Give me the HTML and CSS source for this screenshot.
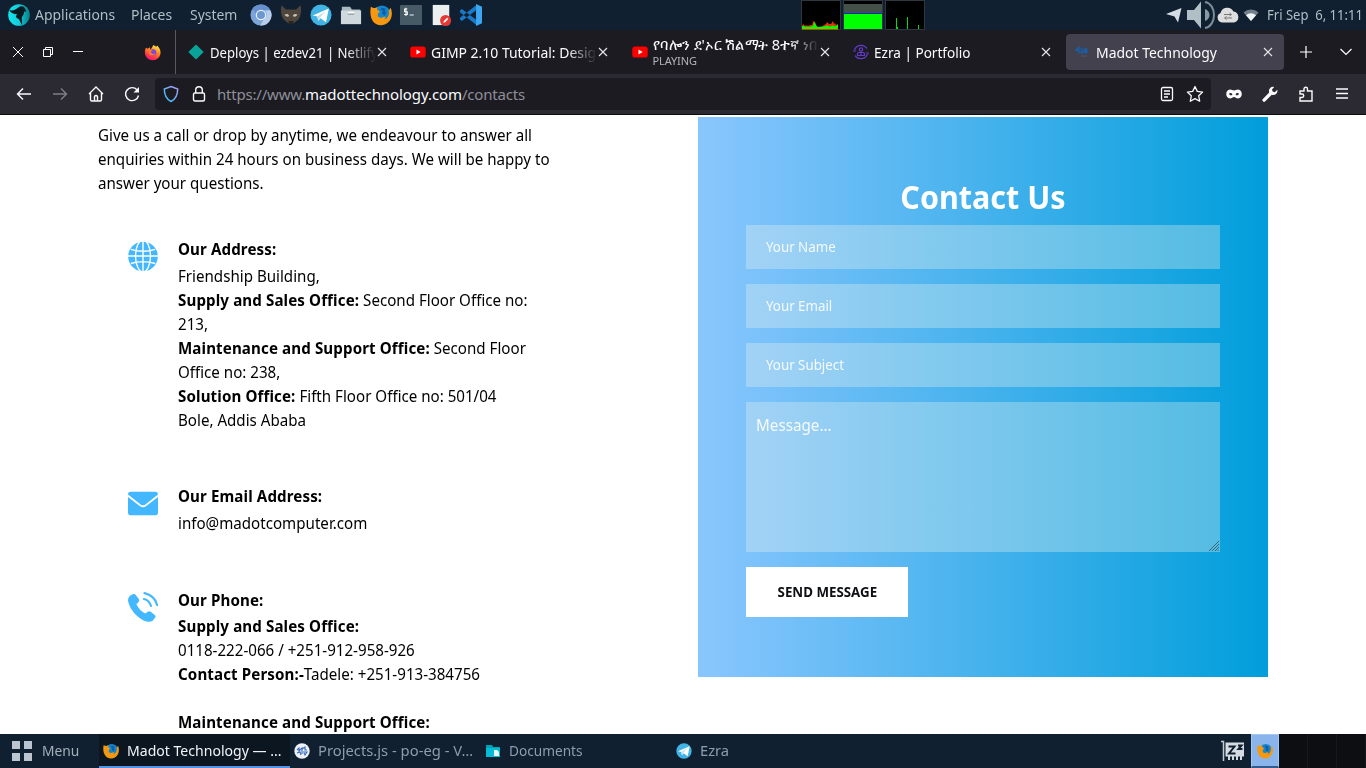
FILE: index.html
```html
<!DOCTYPE html>
<html lang="en"><head><meta charset="utf-8"><title>Madot Technology</title><link rel="stylesheet" href="styles.css"></head>
<body>
<svg width="0" height="0" class="defs" aria-hidden="true">
<defs>
<linearGradient id="foxg" x1=".8" y1="0" x2=".3" y2="1"><stop stop-color="#fff44f"/><stop offset=".4" stop-color="#ff8a22"/><stop offset=".75" stop-color="#ff3647"/><stop offset="1" stop-color="#e31587"/></linearGradient>
<linearGradient id="shg" x1="0" y1="1" x2="1" y2="0"><stop stop-color="#2cc3f5"/><stop offset="1" stop-color="#a99cf5"/></linearGradient>
<linearGradient id="parg"><stop stop-color="#15e4ee"/><stop offset=".5" stop-color="#12cedb"/><stop offset="1" stop-color="#087e88"/></linearGradient>
<symbol id="x" viewBox="0 0 10 10"><path d="M1 1l8 8M9 1L1 9" stroke="#e8e8ec" stroke-width="1.1" fill="none"/></symbol>
<symbol id="yt" viewBox="0 0 16 12"><rect x=".3" y=".5" width="15.4" height="11" rx="2.6" fill="#f00"/><path d="M6.5 3.5v5L10.7 6z" fill="#fff"/></symbol>
<symbol id="tg" viewBox="0 0 24 24"><circle cx="12" cy="12" r="11.5" fill="#41b4e6"/><path d="M3 12.5L20.5 5l-3 15-6-4.5-2.500 3-1-5z" fill="#fff"/><path d="M7.800 13.500L17.500 7.500l-7 7.500-1.500 3.500z" fill="#c5dceb"/></symbol>
<symbol id="ff" viewBox="0 0 24 24"><circle cx="13" cy="11" r="9.500" fill="#1686cc"/><path d="M1 3c1.600 1 2.600 1.300 4.200 1.400l2.800-.9-.3 2.500 3 2.200-2 2.500c-1 3.300 1.500 5.300 4.500 4 1.700-.8 2.900-1.200 3.800-.5-.5 1.300-1 1.800-1.500 2.200 4-.5 5.700-4.300 5-9.300l2-3c3.600 8-.1 18.500-10 19C4 23.500-1.500 15 1 3z" fill="#f6980f"/><path d="M13 4l4 1-1 4 2-1-2 5-3-3 1-3-3-1z" fill="#0d5ea6"/></symbol>
</defs></svg>

<header class="panel">
  <div class="menus">
    <svg class="parrot" viewBox="0 0 24 24"><circle cx="12" cy="12" r="11.800" fill="url(#parg)"/><path d="M1.500 6.500C5 8 8 6 11 4c3-2.300 6.500-2 7.500 1l1.500 3.500-2.500-.2c0 3-1 4.700-2.500 6.200l.5 9-3.500-7C7.500 14.500 8 13 10.500 11.500 6 11 3 10 1.500 6.500z" fill="#071a20"/></svg>
    <span class="ui w1"><i>Applications</i></span><span class="ui w2"><i>Places</i></span><span class="ui w3"><i>System</i></span>
  </div>
  <div class="launch">
    <svg viewBox="0 0 24 24"><circle cx="12" cy="12" r="11.500" fill="#7ba5d9"/><path d="M12 .5a11.500 11.500 0 0 1 10 6H12a5.500 5.500 0 0 0-5.500 4L2.700 5A11.500 11.500 0 0 1 12 .5z" fill="#668fcd"/><path d="M22.300 7A11.500 11.500 0 0 1 11 23.500l5-8a5.500 5.500 0 0 0 .5-8.500z" fill="#b7cfea"/><circle cx="12" cy="12" r="5.700" fill="#e9f0f9"/><circle cx="12" cy="12" r="4.400" fill="#6b98d3"/></svg>
    <svg viewBox="0 0 24 24"><path d="M1.500 1.500c2 1 3.500 3 5 4.500h11c1.500-1.500 3-3.500 5-4.500 1 6 .5 11-2.500 15.500l-5 4H9l-5-4C1 12.500.5 7.500 1.500 1.500z" fill="#4e463d"/><path d="M5 11.500c2-1 4-1 5 1.500-1.500 1.500-4 1-5-1.500zM14 13c1-2.500 3-2.500 5-1.500-1 2.500-3.500 3-5 1.500z" fill="#c6c1b3"/><path d="M9 18.500h6l-1 3h-4z" fill="#2a2521"/></svg>
    <svg viewBox="0 0 24 24"><use href="#tg"/></svg>
    <svg viewBox="0 0 24 24"><path d="M2 3h9l2 3h9v15H2z" fill="#a9b7be"/><path d="M1 7h22v15H1z" fill="#cfd8dc"/><path d="M8.500 9.500h7" stroke="#fff" stroke-width="2"/><path d="M8.500 11h7" stroke="#71828b"/></svg>
    <svg viewBox="0 0 24 24"><use href="#ff"/></svg>
    <svg viewBox="0 0 24 24"><rect y="1" width="24" height="22" rx="1" fill="#455a64"/><path d="M8 5.500H5v3h3v3H4.500M6.500 4v9" stroke="#fff" fill="none" stroke-width="1.100"/><path d="M10.500 12h4.500" stroke="#fff"/></svg>
    <svg viewBox="0 0 24 24"><path d="M3 1h18v22H3z" fill="#eceff0"/><circle cx="17" cy="18" r="6" fill="#e53935"/><path d="M14.500 20.500l.6-2 3.500-3.500 1.400 1.400-3.500 3.500z" fill="#fff"/></svg>
    <svg viewBox="0 0 24 24"><path d="M0 7l2-1.500L18 17.500V23L0 9zM0 17l2 1.500L18 6.500V1L0 15z" fill="#1979c9"/><path d="M17.500 0l6.500 3v18l-6.500 3z" fill="#3ba7f0"/></svg>
  </div>
  <div class="monitors">
    <svg viewBox="0 0 40 30"><rect x=".5" y=".5" width="39" height="29" fill="#000" stroke="#2e3640"/><path d="M1 26l1-2 2 2 1-1 2 1 2-1 2 0 1-3 1-1 1 1 1 3 2 2h3l3-2 2-1 1-2 2 2 2 0 2-3 1 3 1-1 1 2 2-1v6H1z" fill="#d31"/><path d="M1 29v-3l2 0 2 1 2-.5 2 .5 3-1 1-4 1 1 2 4 7-.5 3-1 3 1 3-1 2 1 3-2v4.500z" fill="#0f0"/></svg>
    <svg viewBox="0 0 40 30"><rect x=".5" y=".5" width="39" height="29" fill="#000" stroke="#2e3640"/><path d="M1 4h38v9H1z" fill="#445047"/><path d="M1 13h38v1H1z" fill="#0028d0"/><path d="M1 14h38v15H1z" fill="#0f0"/></svg>
    <svg viewBox="0 0 40 30"><rect x=".5" y=".5" width="39" height="29" fill="#000" stroke="#2e3640"/><path d="M11.500 18v11M12.500 27v2M22.500 17v12M33.500 25v4" stroke="#0d1" /></svg>
  </div>
  <div class="tray">
    <svg width="16" height="16" viewBox="0 0 16 16"><path d="M0 7L15.500 1 12 15.500 8.500 9.500z" fill="#d6dde4"/></svg>
    <svg width="30" height="30" viewBox="0 0 30 30"><path d="M1 10h7l7-8.500v27L8 20H1z" fill="#b0bec5"/><path d="M19 2c12 2 12 24 0 26" stroke="#788d98" stroke-width="2" fill="none"/><path d="M19 9c6 2 6 10 0 12z" fill="#879aa4"/></svg>
    <svg width="22" height="16" viewBox="0 0 22 16"><path d="M5 15.500A5 5 0 0 1 3.500 6 7 7 0 0 1 16.500 4.500 5.600 5.600 0 0 1 17 15.500z" fill="#dedede"/><path d="M7 7.500h7M12.500 6l2 1.500-2 1.500M15 11H8M9.500 9.500l-2 1.500 2 1.500" stroke="#777" fill="none"/></svg>
    <svg width="16" height="12" viewBox="0 0 16 12"><path d="M.5 3.500a11 11 0 0 1 15 0L8 12z" fill="#71808a"/><path d="M3 6.200a7.500 7.500 0 0 1 10 0L8 12z" fill="#f0f3f4"/></svg>
    <span class="ui clock"><i>Fri Sep&nbsp; 6, 11:11</i></span>
  </div>
</header>

<div class="tabbar">
  <div class="win">
    <svg width="12" height="12" viewBox="0 0 12 12"><path d="M1 1l10 10M11 1L1 11" stroke="#fff"/></svg>
    <svg width="12" height="12" viewBox="0 0 12 12" fill="none" stroke="#fff"><path d="M1.500 3.500h7v7h-7zM3.500 3.500v-2h7v7h-2"/></svg>
    <svg width="12" height="12" viewBox="0 0 12 12"><path d="M1 5.500h10" stroke="#fff"/></svg>
    <svg class="fx" width="17" height="17" viewBox="0 0 18 18"><path d="M2 4l2 1 2-1.500L7 6l3-5 3 2 1-1.500c3 3 4 6 3.300 9.500A8.300 8.300 0 0 1 1 10C.8 8 1 6 2 4z" fill="url(#foxg)"/><circle cx="9.500" cy="9" r="3.500" fill="#8047d8"/><path d="M3 6l6 .500-2 2 2 2 3-.5c-1 2-4 3-6 1.500z" fill="#ff7b29"/></svg>
  </div>
  <div class="tabs">
    <div class="tab"><svg class="fav" viewBox="0 0 16 16"><path d="M8 .500L15.700 8 8 15.500.3 8z" fill="#0aa39a"/></svg><div class="title fade first"><span class="ui"><i>Deploys | ezdev21 | Netlify</i></span></div><svg class="cl"><use href="#x"/></svg></div>
    <div class="tab"><svg class="fav yt"><use href="#yt"/></svg><div class="title fade"><span class="ui"><i>GIMP 2.10 Tutorial: Desig</i></span></div><svg class="cl"><use href="#x"/></svg></div>
    <div class="tab"><svg class="fav yt"><use href="#yt"/></svg><div class="title fade two"><span class="am">የባሎን ደ'ኦር ሽልማት 8ተኛ ነበ</span><small>PLAYING</small></div><svg class="cl"><use href="#x"/></svg></div>
    <div class="tab"><svg class="fav" viewBox="0 0 16 16" fill="none" stroke="#623bc6" stroke-width="1.200"><path d="M1.500 6a7 7 0 0 1 12.500-1.500M14.500 10a7 7 0 0 1-12.500 1.500M0 7h3M13 9h3"/><circle cx="8" cy="5.500" r="1.700"/><path d="M4.500 11.500V10q0-1.500 1.500-1.500h4q1.500 0 1.500 1.500v1.500zM8 8.500v3"/></svg><div class="title ez"><span class="ui"><i>Ezra | Portfolio</i></span></div><svg class="cl"><use href="#x"/></svg></div>
    <div class="tab active"><svg class="fav" viewBox="0 0 16 16" fill="#1c5da6"><path d="M0 6l3-3.500h1.500v7H3V7H0zM5.500 3.500h1v3h1v-3h1v6h-3zM9 4.500h3.500v5H9z"/><path d="M6 11.500h6v1H6z" fill="#59566a"/></svg><div class="title"><span class="ui"><i>Madot Technology</i></span></div><svg class="cl"><use href="#x"/></svg></div>
  </div>
  <svg class="plus" width="12" height="12" viewBox="0 0 12 12"><path d="M6 0v12M0 6h12" stroke="#fff" stroke-width="1.200"/></svg>
  <svg width="12" height="8" viewBox="0 0 12 8"><path d="M.5 1L6 6.500 11.500 1" stroke="#fff" stroke-width="1.200" fill="none"/></svg>
</div>

<nav class="toolbar">
  <div class="nav">
    <svg viewBox="0 0 16 16"><path d="M15 8H1.500M7 2.500L1.500 8 7 13.500"/></svg>
    <svg class="off" viewBox="0 0 16 16"><path d="M1 8h13.500M9 2.500L14.500 8 9 13.500"/></svg>
    <svg viewBox="0 0 16 16"><path d="M1 8l7-7 7 7M2.500 7v6.500q0 1.500 1.500 1.500h8q1.500 0 1.500-1.500V7M6.500 15v-4.500q1.500-2 3 0V15"/></svg>
    <svg viewBox="0 0 16 16"><path d="M13 3.800A6.500 6.500 0 1 0 14.500 9.500"/><path d="M15 1v5.500H9.500z" fill="#fbfbfe" stroke="none"/></svg>
  </div>
  <div class="urlbar">
    <svg width="16" height="18" viewBox="0 0 16 18"><path d="M8 1.500l6.700 2.500c0 6-1.700 10-6.700 12.500C3 14 1.300 10 1.300 4z" fill="none" stroke="url(#shg)" stroke-width="1.500"/></svg>
    <svg class="lock" width="14" height="18" viewBox="0 0 14 18" fill="none" stroke="#fbfbfe" stroke-width="1.400"><rect x="1.500" y="8" width="11" height="8" rx="1.500"/><path d="M3.700 8V5a3.300 3.300 0 0 1 6.600 0v3"/></svg>
    <span class="url">https://www.<em>madottechnology.com</em>/contacts</span>
    <svg class="reader" width="14" height="16" viewBox="0 0 14 16" fill="none" stroke="#fbfbfe" stroke-width="1.300"><rect x="1.500" y="1.500" width="11" height="13" rx="1.500"/><path d="M4 5h6M4 8h6M4 11h4"/></svg>
    <svg width="18" height="18" viewBox="0 0 18 18" fill="none" stroke="#fbfbfe" stroke-width="1.300" stroke-linejoin="round"><path d="M9 1.500l2.300 4.900 5.300.7-3.900 3.700 1 5.400L9 13.600l-4.700 2.600 1-5.400L1.400 7.100l5.300-.7z"/></svg>
  </div>
  <div class="ext">
    <svg viewBox="0 0 16 16"><path fill-rule="evenodd" fill="#fbfbfe" stroke="none" d="M4 3.500c2 0 2.500 1 4 1s2-1 4-1c5 0 5 9 0 9-2 0-2.500-1.500-4-1.500s-2 1.500-4 1.500c-5 0-5-9 0-9zM3 8c1 1.800 3 1.800 3.500.3C5.500 6.500 3.500 6.500 3 8zM13 8c-.5-1.500-2.500-1.500-3.500.3.500 1.500 2.500 1.500 3.500-.3z"/></svg>
    <svg viewBox="0 0 16 16"><path fill="#fbfbfe" stroke="none" d="M15.300 3.800a4.200 4.200 0 0 1-5.500 5L3.300 15.300a1.600 1.600 0 0 1-2.400-2.400L7.200 6.400a4.200 4.200 0 0 1 5-5.500L10 3.400l.6 2.200 2.200.6z"/></svg>
    <svg viewBox="0 0 16 16"><path d="M2 15V11.500h2a1.700 1.700 0 0 0 0-3.500H2V5h4V3a1.700 1.700 0 0 1 3.500 0v2H14v10z"/></svg>
    <svg viewBox="0 0 16 16"><path d="M2 3h12M2 7.500h12M2 12h12"/></svg>
  </div>
</nav>

<main>
  <section class="info">
    <p class="intro">Give us a call or drop by anytime, we endeavour to answer all<br>enquiries within 24 hours on business days. We will be happy to<br>answer your questions.</p>
    <article><svg viewBox="0 0 32 32"><circle cx="16" cy="16.500" r="15.800" fill="#43b7ff"/><g fill="none" stroke="#fff" stroke-width="1.500"><path d="M16 0v32M0 16h32M3 9q13 4 26 0M3 24q13-4 26 0"/><ellipse cx="16" cy="16" rx="8" ry="17"/></g></svg>
      <div><h3>Our Address:</h3><p>Friendship Building,<br><b>Supply and Sales Office:</b> Second Floor Office no:<br>213,<br><b>Maintenance and Support Office:</b> Second Floor<br>Office no: 238,<br><b>Solution Office:</b> Fifth Floor Office no: 501/04<br>Bole, Addis Ababa</p></div></article>
    <article class="mail"><svg viewBox="0 0 32 32"><path fill="#43b7ff" d="M3 4h26q3 0 3 3L18.500 17.500q-2.500 2-5 0L0 7q0-3 3-3zM0 9.500l12.500 9.800q3.500 2.500 7 0L32 9.500V26q0 3-3 3H3q-3 0-3-3z"/></svg>
      <div><h3>Our Email Address:</h3><p>info@madotcomputer.com</p></div></article>
    <article class="phone"><svg viewBox="0 0 32 32"><path fill="#43b7ff" d="M2 4l3-1.500q2-1 3.500 1l3 4q1 2-.5 3.500L9 13q3 6.500 9.500 10l2.500-2q1.500-1 3.200 0l4.300 3.500q1.500 1.500.3 3L26 31q-4 2-10-1C7 25 1 16 0 9q0-3 2-5z"/><g fill="none" stroke="#43b7ff" stroke-width="2.200" stroke-linecap="round"><path d="M17.500 1.200Q28.500 3.500 31 14M17 7.500q6 1.500 7.500 7.500"/></g></svg>
      <div><h3>Our Phone:</h3><p><b>Supply and Sales Office:</b><br>0118-222-066 / +251-912-958-926<br><b>Contact Person:-</b>Tadele: +251-913-384756<br><br><b>Maintenance and Support Office:</b></p></div></article>
  </section>
  <form class="contact">
    <h2>Contact Us</h2>
    <div class="field"><span>Your Name</span></div>
    <div class="field"><span>Your Email</span></div>
    <div class="field"><span>Your Subject</span></div>
    <div class="field area"><span>Message...</span><svg width="10" height="10" viewBox="0 0 10 10"><path d="M0 10L10 0M3 10l7-7M6 10l4-4M8.500 10l1.500-1.500" stroke="#3a6576"/></svg></div>
    <button type="button"><span>SEND MESSAGE</span></button>
  </form>
</main>

<footer class="taskbar">
  <div class="menu"><svg width="20" height="20" viewBox="0 0 20 20"><path d="M0 0h8v8H0zM12 0h8v8h-8zM0 12h8v8H0zM12 12h8v8h-8z" fill="#bcc5cf"/></svg><span class="ui"><i>Menu</i></span></div>
  <div class="task on"><svg viewBox="0 0 24 24"><use href="#ff"/></svg><span class="ui"><i>Madot Technology — ...</i></span></div>
  <div class="task code"><svg viewBox="0 0 16 16"><circle cx="8" cy="8" r="7.700" fill="#eef1f5"/><path d="M3 7l2-2v3l3-3v6M3 10l3-1 1 3M8 6l3-2v3h2M9 9h4l-2 3-1-2" stroke="#356bbd" stroke-width="1.100" fill="none"/></svg><span class="ui"><i>Projects.js - po-eg - V…</i></span></div>
  <div class="task"><svg viewBox="0 0 16 16"><path d="M1 2h6l1 2h7v10H1z" fill="#00a3b5"/><path d="M1 5h14v9H1z" fill="#00bcd4"/><path d="M9 7h3l2 2v4H9z" fill="#e7fbfd"/></svg><span class="ui doc"><i>Documents</i></span></div>
  <div class="task"><svg viewBox="0 0 24 24"><use href="#tg"/></svg><span class="ui ezra"><i>Ezra</i></span></div>
  <svg class="zz" width="24" height="22" viewBox="0 0 24 22"><path d="M0 1.500h2.500V21" stroke="#c3cbd3" stroke-width="1.500" fill="none"/><path d="M4.500 2.500H23v14H4.500zM7 16h2v4H7zM11 16h2v4h-2zM15 16h2v4h-2zM19 16h2v4h-2z" fill="#d5dbe2"/><path d="M7.500 6.500h6l-5.500 7h6.500M17 5.500h3.500L17.500 9h4" fill="none" stroke="#10202f" stroke-width="2"/></svg>
  <div class="pager"><div class="cur"><svg width="16" height="16" viewBox="0 0 24 24"><use href="#ff"/></svg></div><div></div><div></div><div></div></div>
</footer>
</body></html>
```
FILE: styles.css
```css
*{box-sizing:border-box}
body{margin:0;width:1366px;height:768px;overflow:hidden;display:flex;flex-direction:column;font:16px/24px "Noto Sans","Open Sans",sans-serif;background:#fff;color:#000}
.defs{position:absolute}
svg{flex:none;display:block}
.ui{font-size:15px;line-height:20px;white-space:nowrap;display:block}
.ui i{font-style:normal;display:inline-block;transform:scaleX(.93);transform-origin:0 50%}

.panel{height:30px;flex:none;background:#112030;display:flex;color:#b0bec5;align-items:center}
.panel>div{flex:none}
.panel .ui{margin-top:-2px}
.menus{display:flex;width:249px;padding-left:8px;align-items:center}
.parrot{width:22px;height:22px;margin-right:5px}
.w1{width:96px}.w2{width:59px}
.launch{display:flex;gap:6px;width:552px}
.launch svg{width:24px;height:24px;padding:1px}
.monitors{display:flex;gap:2px;width:365px}
.monitors svg{width:40px;height:30px}
.tray{display:flex;align-items:center;width:200px}
.tray svg:nth-child(2){margin-left:4px}
.tray svg:nth-child(3){margin-left:1px}
.tray svg:nth-child(4){margin-left:4px}
.clock{margin-left:8px;width:98px}
.clock i{transform:scaleX(.87)}

.tabbar{height:44px;flex:none;background:#1c1b22;display:flex;align-items:center;color:#fbfbfe}
.win{width:176px;height:44px;border-right:1px solid #5a5961;display:flex;align-items:center;padding-left:12px;gap:18px}
.fx{margin-left:42px}
.tabs{margin-left:3px;display:flex;gap:3.750px;width:1109px}
.tab{width:218px;height:36px;border-radius:4px;padding-left:9px;display:flex;align-items:center;flex:none}
.active{background:#42414d}
.fav{width:16px;height:16px;margin-right:5px}
.yt{height:12px}
.title{width:166px;overflow:hidden;margin-right:1px}
.fade{mask-image:linear-gradient(90deg,#000 82%,transparent)}
.first{margin-left:1px;width:166px}
.first i{transform:scaleX(.875)}
.ez i{transform:scaleX(.905)}
.cl{width:10px;height:10px}
.am{display:block;font-size:15px;line-height:17px;height:17px;white-space:nowrap;transform:scaleX(.972);transform-origin:0 0}
.title small{display:block;font-size:11px;line-height:15px;color:#b4b3ba;letter-spacing:-.1px}
.plus{margin:0 11px 0 12px}
.plus+svg{margin-left:17px}

.toolbar{height:41px;flex:none;background:#2b2a33;border-bottom:1px solid #0c0c0d;display:flex;align-items:center}
.nav{display:flex;gap:20px;width:155px;padding-left:16px}
.nav svg,.ext svg{width:16px;height:16px;fill:none;stroke:#fbfbfe;stroke-width:1.400}
.nav .off{opacity:.4}
.urlbar{width:1056px;height:32px;background:#1c1b22;border-radius:4px;display:flex;align-items:center;padding:0 7px 0 8px}
.lock{margin-left:13px}
.url{font-size:15px;letter-spacing:-.2px;color:#8f8f98;margin-left:11px;flex:1}
.url em{font-style:normal;letter-spacing:-.08px;color:#fbfbfe}
.reader{margin-right:12px}
.ext{display:flex;gap:20px;padding-left:15px}

main{height:619px;flex:none;overflow:hidden;display:flex}
.info{width:698px;padding:8px 0 0 98px}
p,h2,h3{margin:0}
.intro,article>div{white-space:nowrap;transform:scaleX(.945);transform-origin:0 0}
b,h3{letter-spacing:.12px}
article{display:flex;padding-left:30px;margin-top:42px}
article>svg{width:30px;height:30px;margin:4px 20px 0 0}
h3{font-size:16px;line-height:24px;margin-bottom:3px}
.mail{margin-top:52px}
.phone{margin-top:53px}
.phone h3{margin-bottom:2px}
.contact{width:570px;height:560px;margin-top:2px;padding:60px 48px 0;background:linear-gradient(90deg,#8ac6fe,#009edb);color:#fff}
h2{font-size:32px;line-height:40px;height:48px;text-align:center;transform:scaleX(.953)}
.field{height:44px;margin-bottom:15px;background:rgba(233,244,236,.330);padding:0 20px;font-size:14px;line-height:44px;color:rgba(255,255,255,.9)}
.field span,button span{display:inline-block;transform:scaleX(.951);transform-origin:0 50%}
.area{height:150px;padding:11px 0 0 10px;font-size:16px;line-height:24px;display:flex;justify-content:space-between;align-items:flex-start}
.area svg{margin:128px 1px 0 0}
button{width:162px;height:50px;border:0;padding:0;background:#fff;color:#0d0f12;font:700 14px/50px "Noto Sans",sans-serif}
button span{transform-origin:50% 50%}

.taskbar{height:34px;flex:none;background:#112030;color:#8c9dab;display:flex;align-items:center}
.taskbar .ui{margin-top:-2px}
.menu{width:99px;padding-left:12px;display:flex;gap:10px;align-items:center;color:#a3b0bb}
.menu i{transform:scaleX(.92)}
.task{width:191px;height:34px;padding-left:4px;display:flex;gap:8px;align-items:center}
.task svg{width:16px;height:16px}
.on{background:#0c1620;color:#f0f4f7;border-bottom:2px solid #5294e2;padding-top:2px}
.on i{transform:scaleX(.937)}
.code i{transform:scaleX(.985)}
.doc i{transform:scaleX(.91)}
.ezra i{transform:scaleX(.98)}
.zz{margin-left:358px}
.pager{display:flex;margin-left:6px;height:34px;background:#0d0e12;width:115px}
.pager div{width:29px;border-right:1px solid #16181d}
.pager .cur{width:28px;background:#8ab4ec;border:1px solid #a4c8f5;border-bottom:2px solid #36598b;display:flex;align-items:center;justify-content:center}
```
